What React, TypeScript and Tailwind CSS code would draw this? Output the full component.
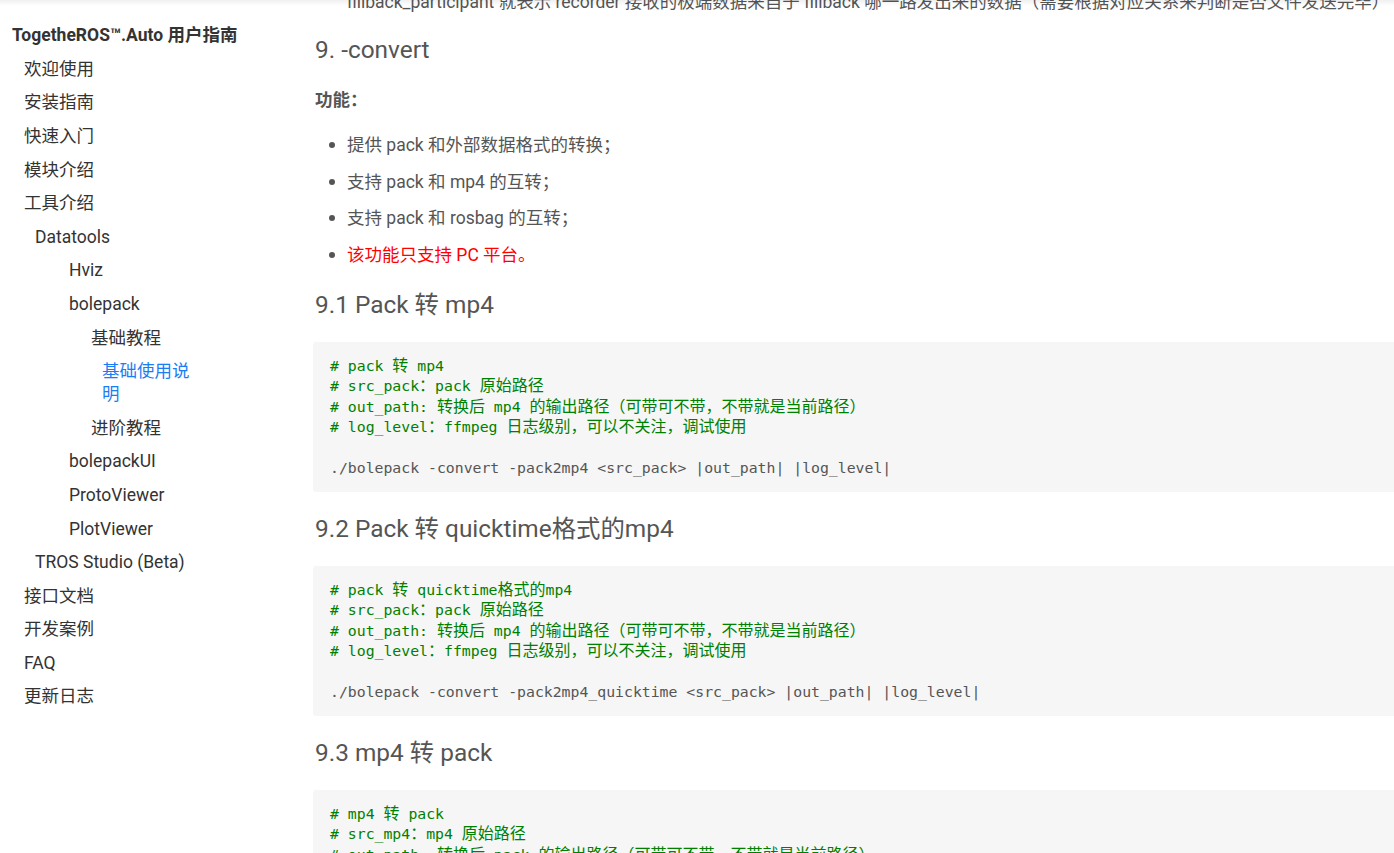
const nav: { label: string; level: number; active?: boolean }[] = [
  { label: '欢迎使用', level: 1 },
  { label: '安装指南', level: 1 },
  { label: '快速入门', level: 1 },
  { label: '模块介绍', level: 1 },
  { label: '工具介绍', level: 1 },
  { label: 'Datatools', level: 2 },
  { label: 'Hviz', level: 3 },
  { label: 'bolepack', level: 3 },
  { label: '基础教程', level: 4 },
  { label: '基础使用说明', level: 5, active: true },
  { label: '进阶教程', level: 4 },
  { label: 'bolepackUI', level: 3 },
  { label: 'ProtoViewer', level: 3 },
  { label: 'PlotViewer', level: 3 },
  { label: 'TROS Studio (Beta)', level: 2 },
  { label: '接口文档', level: 1 },
  { label: '开发案例', level: 1 },
  { label: 'FAQ', level: 1 },
  { label: '更新日志', level: 1 },
];

const indent: Record<number, string> = {
  1: 'pl-[12px]',
  2: 'pl-[23px]',
  3: 'pl-[57px]',
  4: 'pl-[79px]',
  5: 'pl-[90px]',
};

const bullets = [
  { text: '提供 pack 和外部数据格式的转换；' },
  { text: '支持 pack 和 mp4 的互转；' },
  { text: '支持 pack 和 rosbag 的互转；' },
  { text: '该功能只支持 PC 平台。', red: true },
];

const blocks = [
  {
    title: '9.1 Pack 转 mp4',
    comments: [
      '# pack 转 mp4',
      '# src_pack：pack 原始路径',
      '# out_path: 转换后 mp4 的输出路径（可带可不带，不带就是当前路径）',
      '# log_level：ffmpeg 日志级别，可以不关注，调试使用',
    ],
    cmd: './bolepack -convert -pack2mp4 <src_pack> |out_path| |log_level|',
  },
  {
    title: '9.2 Pack 转 quicktime格式的mp4',
    comments: [
      '# pack 转 quicktime格式的mp4',
      '# src_pack：pack 原始路径',
      '# out_path: 转换后 mp4 的输出路径（可带可不带，不带就是当前路径）',
      '# log_level：ffmpeg 日志级别，可以不关注，调试使用',
    ],
    cmd: './bolepack -convert -pack2mp4_quicktime <src_pack> |out_path| |log_level|',
  },
  {
    title: '9.3 mp4 转 pack',
    comments: [
      '# mp4 转 pack',
      '# src_mp4：mp4 原始路径',
      '# out_path: 转换后 pack 的输出路径（可带可不带，不带就是当前路径）',
      '# log_level：ffmpeg 日志级别，可以不关注，调试使用',
    ],
    cmd: './bolepack -convert -mp42pack <src_mp4> |out_path| |log_level|',
  },
];

// CJK runs in code render a bit wider than the mono font's fallback
function CodeLine({ text }: { text: string }) {
  const parts = text.split(/([\u3000-\u9fff\uff00-\uffef]+)/);
  return (
    <>
      {parts.map((p, i) =>
        i % 2 === 1 ? (
          <span key={i} className="text-[16px]">{p}</span>
        ) : (
          <span key={i}>{p}</span>
        ),
      )}
    </>
  );
}

function CodeBlock({ comments, cmd }: { comments: string[]; cmd: string }) {
  return (
    <pre className="bg-[#f6f6f6] rounded-[3px] pl-[17px] pt-[14px] pb-[13px] -ml-[2px] mr-[-40px] text-[14.8px] leading-[20.5px] font-['DejaVu_Sans_Mono','Noto_Sans_CJK_SC',monospace] whitespace-pre">
      {comments.map((c, i) => (
        <div key={i} className="text-[#008000] h-[20.5px]">
          <CodeLine text={c} />
        </div>
      ))}
      <div className="h-[20.5px]">&nbsp;</div>
      <div className="text-[#555] h-[20.5px]">{cmd}</div>
    </pre>
  );
}

export default function App() {
  return (
    <div className="relative h-[853px] w-[1394px] overflow-hidden bg-white font-['Roboto','Noto_Sans_CJK_SC',sans-serif]">
      <div className="absolute inset-x-0 top-0 h-[6px] bg-gradient-to-b from-black/[0.06] to-transparent z-10" />
      <div className="flex">
        {/* Sidebar */}
        <aside className="w-[300px] shrink-0 pt-[23px]">
          <h1 className="pl-[12px] text-[17.5px] leading-[24px] font-bold text-[#333] whitespace-nowrap">
            TogetheROS™.Auto 用户指南
          </h1>
          <ul className="ml-[12px] w-[186px] mt-[5.5px]">
            {nav.map((item, i) => (
              <li
                key={i}
                className={`py-[5.3px] text-[17.5px] leading-[23px] ${indent[item.level]} ${
                  item.active ? 'text-[#1a7df5]' : 'text-[#333]'
                }`}
              >
                {item.label}
              </li>
            ))}
          </ul>
        </aside>

        {/* Main content */}
        <main className="flex-1 min-w-0 pl-[15px] flex flex-col text-[#555]">
          <p className="mt-[-10px] pl-[32px] text-[17.5px] leading-[24px] whitespace-nowrap">
            fillback_participant 就表示 recorder 接收的极端数据来自于 fillback 哪一路发出来的数据（需要根据对应关系来判断是否文件发送完毕）
          </p>
          <h2 className="mt-[18px] text-[24.4px] leading-[36px]">9. -convert</h2>
          <p className="mt-[20px] text-[17.5px] leading-[24px] font-bold">功能：</p>
          <ul className="mt-[14.6px] text-[17.5px]">
            {bullets.map((b, i) => (
              <li key={i} className="flex items-center h-[36.7px]">
                <span className="w-[32px] flex justify-center pl-[2px]">
                  <span className="w-[6px] h-[6px] rounded-full bg-[#555]" />
                </span>
                <span className={b.red ? 'text-[#ff0000]' : ''}>{b.text}</span>
              </li>
            ))}
          </ul>
          {blocks.map((b, i) => (
            <section key={i} className={i === 0 ? 'mt-[13.6px]' : 'mt-[19px]'}>
              <h2 className="text-[24.4px] leading-[36px] mb-[19px]">{b.title}</h2>
              <CodeBlock comments={b.comments} cmd={b.cmd} />
            </section>
          ))}
        </main>
      </div>
    </div>
  );
}
